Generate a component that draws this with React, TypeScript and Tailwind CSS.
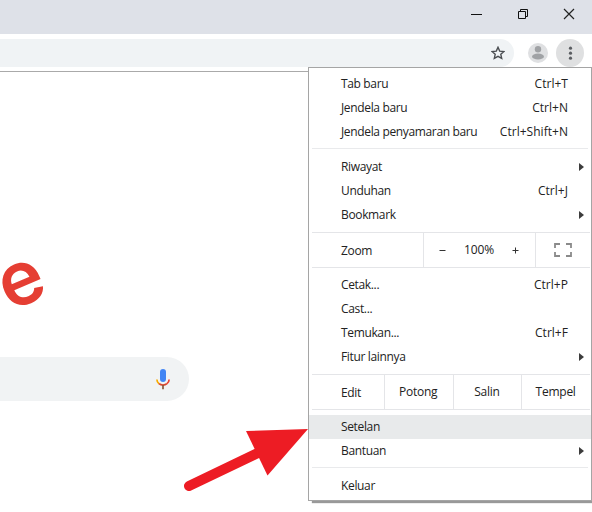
import React from 'react';

interface MenuRowProps {
  label: string;
  shortcut?: string;
  submenu?: boolean;
  active?: boolean;
}

const MenuRow: React.FC<MenuRowProps> = ({ label, shortcut, submenu, active }) => (
  <div className={`flex h-6 items-center pl-8 ${active ? 'bg-[#e8eaeb]' : ''}`}>
    <span>{label}</span>
    {shortcut && <span className="ml-auto pr-[23px] tracking-[0.03px]">{shortcut}</span>}
    {submenu && (
      <svg className="mr-[7px] ml-auto h-2 w-[5px]" viewBox="0 0 5 8" fill="#3c3c3c">
        <path d="M0 0L5 4L0 8Z" />
      </svg>
    )}
  </div>
);

const Separator: React.FC = () => <div className="mr-[3px] ml-[3px] h-px bg-[#e9eaec]" />;

const ZoomRow: React.FC = () => (
  <div className="mr-px ml-[3px] flex h-9 border-y border-[#e4e5e8]">
    <div className="flex w-[111px] items-center pl-[29px] pt-0.5">Zoom</div>
    <div className="flex w-28 items-center border-l border-[#e4e5e8]">
      <svg className="ml-[15px] h-[7px] w-[7px]" viewBox="0 0 7 7" stroke="#333">
        <path d="M0.5 3.5H6.5" />
      </svg>
      <span className="w-[66px] text-center tracking-[-0.1px]">100%</span>
      <svg className="h-[7px] w-[7px]" viewBox="0 0 7 7" stroke="#333">
        <path d="M0.5 3.5H6.5M3.5 0.5V6.5" />
      </svg>
    </div>
    <div className="flex flex-1 items-center border-l border-[#e4e5e8] pl-[18px]">
      <svg className="h-[14px] w-[18px]" viewBox="0 0 18 14" fill="none" stroke="#8a8a8a" strokeWidth="1.8">
        <path d="M1 5V1H6M12 1H17V5M17 9V13H12M6 13H1V9" />
      </svg>
    </div>
  </div>
);

const EditRow: React.FC = () => (
  <div className="mr-px ml-[3px] flex h-9 border-y border-[#e4e5e8]">
    <div className="flex w-[72px] items-center pl-[29px] pt-0.5">Edit</div>
    {['Potong', 'Salin', 'Tempel'].map((action) => (
      <div
        key={action}
        className="flex w-[69px] items-center justify-center border-l border-[#e4e5e8] pr-px tracking-[-0.25px]"
      >
        {action}
      </div>
    ))}
  </div>
);

const ChromeMenu: React.FC = () => (
  <div className="absolute top-[67px] left-[308px] h-[434px] w-[284px] border border-[#a5a5a5] bg-white pt-1 font-['Open_Sans','Noto_Sans',sans-serif] text-[12px] leading-4 tracking-[-0.35px] text-[#222] shadow-[3px_3px_1px_-1px_#999]">
    <MenuRow label="Tab baru" shortcut="Ctrl+T" />
    <MenuRow label="Jendela baru" shortcut="Ctrl+N" />
    <MenuRow label="Jendela penyamaran baru" shortcut="Ctrl+Shift+N" />
    <div className="pt-1 pb-1.5">
      <Separator />
    </div>
    <MenuRow label="Riwayat" submenu />
    <MenuRow label="Unduhan" shortcut="Ctrl+J" />
    <MenuRow label="Bookmark" submenu />
    <div className="pt-[5px] pb-[5px]">
      <ZoomRow />
    </div>
    <MenuRow label="Cetak..." shortcut="Ctrl+P" />
    <MenuRow label="Cast..." />
    <MenuRow label="Temukan..." shortcut="Ctrl+F" />
    <MenuRow label="Fitur lainnya" submenu />
    <div className="pt-[5px] pb-[5px]">
      <EditRow />
    </div>
    <MenuRow label="Setelan" active />
    <MenuRow label="Bantuan" submenu />
    <div className="pt-1 pb-1.5">
      <Separator />
    </div>
    <MenuRow label="Keluar" />
  </div>
);

const TitleBar: React.FC = () => (
  <div className="flex h-[34px] items-start justify-end bg-[#dee1e8] pt-2 pr-[17px]">
    <svg className="h-3 w-[11px]" viewBox="0 0 11 12" stroke="#111">
      <path d="M0 6.5H11" />
    </svg>
    <svg className="ml-[35px] h-3 w-[11px]" viewBox="0 0 11 12" fill="none" stroke="#111">
      <path d="M1.5 3.5H8.5V10.5H1.5ZM3.5 3.5V1.5H10.5V8.5H8.5" />
    </svg>
    <svg className="ml-[35px] h-3 w-3" viewBox="0 0 12 12" stroke="#222" strokeWidth="1.2">
      <path d="M1 1L11 11M11 1L1 11" />
    </svg>
  </div>
);

const Toolbar: React.FC = () => (
  <div className="flex h-[38px] items-center border-b border-[#aaa] bg-white">
    <div className="flex h-7 w-[514px] items-center justify-end rounded-r-full bg-[#f0f3f5] pr-[9px]">
      <svg className="h-[14px] w-[14px]" viewBox="0 0 14 14" fill="none" stroke="#4a4d51" strokeWidth="1.4">
        <path d="M7 1.3L8.7 5.1L13 5.5L9.8 8.3L10.7 12.4L7 10.3L3.3 12.4L4.2 8.3L1 5.5L5.3 5.1Z" />
      </svg>
    </div>
    <svg className="ml-[14px] h-5 w-5" viewBox="0 0 20 20">
      <circle cx="10" cy="10" r="10" fill="#dfe0e2" />
      <circle cx="10" cy="6.2" r="3.2" fill="#a0a2a5" />
      <ellipse cx="10" cy="13.5" rx="6" ry="3" fill="#a0a2a5" />
    </svg>
    <svg className="ml-2 h-7 w-7" viewBox="0 0 28 28">
      <circle cx="14" cy="14" r="14" fill="#dfe0e1" />
      <g fill="#5a5d61">
        <circle cx="14.5" cy="9.2" r="1.6" />
        <circle cx="14.5" cy="14.2" r="1.6" />
        <circle cx="14.5" cy="19.2" r="1.6" />
      </g>
    </svg>
  </div>
);

const MicIcon: React.FC = () => (
  <svg className="h-[21px] w-[14px]" viewBox="0 0 14 21" fill="none" strokeWidth="1.7">
    <rect x="4" y="0" width="6" height="13" rx="3" fill="#4285f4" />
    <path d="M0.9 10.5C0.9 12.4 1.8 13.8 3 14.7" stroke="#f9ab00" />
    <path d="M3 14.7C5.2 16.5 8.8 16.5 11 14.7" stroke="#d9472f" />
    <path d="M11 14.7C12.3 13.7 13.1 12.3 13.1 10.5" stroke="#ea4335" />
    <path d="M7 16V20.3" stroke="#8a5a3c" />
  </svg>
);

const App: React.FC = () => (
  <div className="relative h-[512px] w-[592px] overflow-hidden bg-white">
    <TitleBar />
    <Toolbar />
    <div className="flex flex-col items-start pt-[165px]">
      <div className="flex h-[80px] w-[38px] items-center justify-center">
        <span className="block -rotate-[23deg] font-['Inter',sans-serif] text-[75px] leading-none font-semibold text-[#e53e33]">
          e
        </span>
      </div>
      <div className="mt-[40px] flex h-11 w-[189px] items-center justify-end rounded-r-full bg-[#f1f3f4] pr-[19px]">
        <MicIcon />
      </div>
    </div>
    <ChromeMenu />
    <svg className="absolute top-[420px] left-[180px] h-20 w-[130px]" viewBox="180 420 130 80" fill="#ed1c24">
      <path d="M189 486L262 451" stroke="#ed1c24" strokeWidth="10" strokeLinecap="round" />
      <path d="M246 431L308 429L267.5 475.5Z" />
    </svg>
  </div>
);

export default App;
